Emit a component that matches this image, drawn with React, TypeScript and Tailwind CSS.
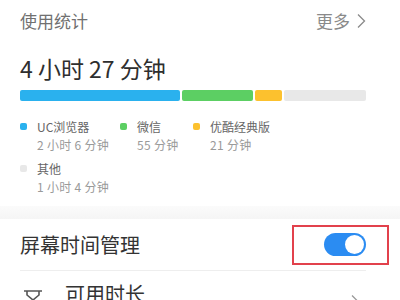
const segments = [
  { w: 160, color: "bg-[#2ab1ee]" },
  { w: 71, color: "bg-[#5ccf63]" },
  { w: 27, color: "bg-[#fcc12e]" },
  { w: 82, color: "bg-[#e8e8e8]" },
];

const legend = [
  { name: "UC浏览器", time: "2 小时 6 分钟", dot: "bg-[#2ab1ee]", w: "w-[100px]" },
  { name: "微信", time: "55 分钟", dot: "bg-[#5ccf63]", w: "w-[73px]" },
  { name: "优酷经典版", time: "21 分钟", dot: "bg-[#fcc12e]", w: "w-[100px]" },
];

const Chevron = ({ className }: { className?: string }) => (
  <svg width="10" height="16" viewBox="0 0 10 16" fill="none" stroke="currentColor" strokeWidth="1.3" className={className}>
    <path d="M2 1.5 8.5 8 2 14.5" />
  </svg>
);

const Item = ({ name, time, dot }: { name: string; time: string; dot: string }) => (
  <div className="flex items-start gap-[10px] whitespace-nowrap">
    <span className={`mt-[4px] h-[7px] w-[7px] shrink-0 rounded-[2px] ${dot}`} />
    <div className="flex flex-col">
      <span className="text-[12px] leading-[16px] text-[#666]">{name}</span>
      <span className="mt-[2px] text-[12px] leading-[16px] tracking-[0.3px] text-[#9a9a9a]">{time}</span>
    </div>
  </div>
);

export default function App() {
  return (
    <div
      className="h-[300px] w-[400px] overflow-hidden bg-white"
      style={{ fontFamily: '"Noto Sans CJK SC", Roboto, sans-serif' }}
    >
      <div className="pl-[20px] pr-[34px]">
        <div className="flex h-[40px] items-center justify-between pt-[1px]">
          <span className="text-[17px] text-[#707070]">使用统计</span>
          <div className="flex items-center gap-[6px] text-[17px] text-[#8a8a8a]">
            更多
            <Chevron />
          </div>
        </div>

        <div className="mt-[11px] text-[23px] font-normal leading-[34px] text-[#2e2e2e]">
          4 小时 27 分钟
        </div>

        <div className="mt-[5px] flex h-[11px] w-[346px] gap-[2px]">
          {segments.map((s, i) => (
            <div key={i} className={`h-full rounded-[2px] ${s.color}`} style={{ width: s.w }} />
          ))}
        </div>

        <div className="mt-[18px] flex">
          {legend.map((l) => (
            <div key={l.name} className={l.w}>
              <Item name={l.name} time={l.time} dot={l.dot} />
            </div>
          ))}
        </div>
        <div className="mt-[8px]">
          <Item name="其他" time="1 小时 4 分钟" dot="bg-[#e8e8e8]" />
        </div>
      </div>

      <div className="mt-[11px] h-[13px] bg-gradient-to-b from-[#fbfbfb] to-[#f5f5f5]" />

      <div className="pl-[20px] pr-[34px]">
        <div className="flex h-[52px] items-center justify-between border-b border-[#eeeeee]">
          <span className="text-[20px] text-[#333]">屏幕时间管理</span>
          <div className="-mr-[23px] flex h-[40px] w-[97px] items-center justify-end border-[2.5px] border-[#e2414c] pr-[21px]">
            <div className="flex h-[23px] w-[42px] items-center justify-end rounded-full bg-[#2b8cf2] pr-[2px]">
              <div className="h-[19px] w-[19px] rounded-full bg-white" />
            </div>
          </div>
        </div>

        <div className="flex h-[40px] items-center">
          <svg width="20" height="24" viewBox="0 0 20 24" className="ml-[3px] mt-[18px]" fill="none" stroke="#555" strokeWidth="1.6">
            <path d="M1 3h18M4 3v4l6 5-6 5v4M16 3v4l-6 5 6 5v4M1 21h18" />
          </svg>
          <span className="ml-[22px] mt-[6px] text-[20px] text-[#333]">可用时长</span>
          <Chevron className="ml-auto mr-[6px] mt-[22px] text-[#999]" />
        </div>
      </div>
    </div>
  );
}
